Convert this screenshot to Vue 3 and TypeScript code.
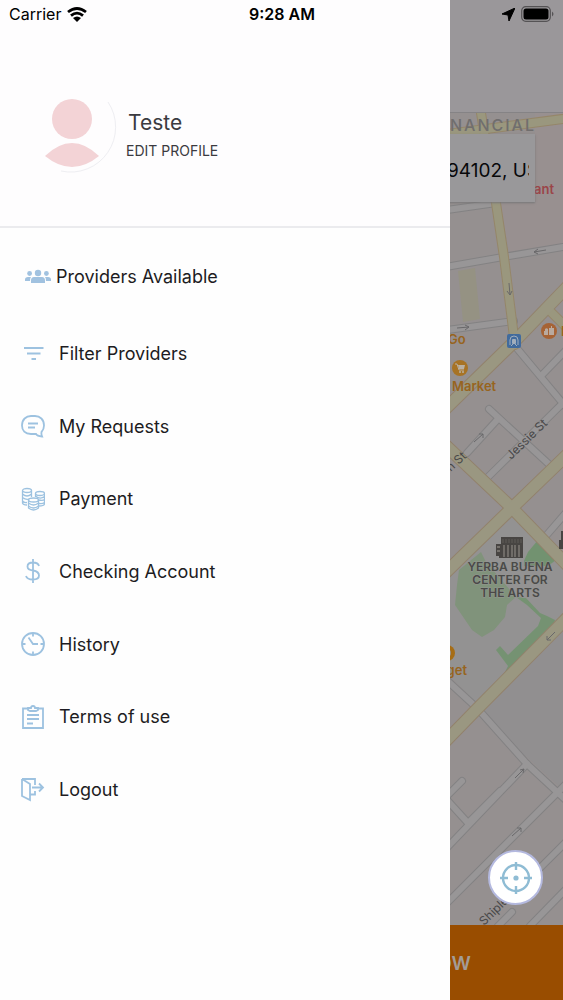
<script setup lang="ts">
import { ref } from 'vue'

type IconName = 'filter' | 'chat' | 'coins' | 'dollar' | 'clock' | 'terms' | 'logout'

interface MenuItem {
  label: string
  icon: IconName
}

const items: MenuItem[] = [
  { label: 'Filter Providers', icon: 'filter' },
  { label: 'My Requests', icon: 'chat' },
  { label: 'Payment', icon: 'coins' },
  { label: 'Checking Account', icon: 'dollar' },
  { label: 'History', icon: 'clock' },
  { label: 'Terms of use', icon: 'terms' },
  { label: 'Logout', icon: 'logout' },
]

const address = ref('94102, US')

const greyRoads: string[] = [
  'M440 211L496 203',
  'M440 268L503 257L563 247',
  'M440 331L514 321',
  'M515 346L570 412',
  'M541 376L570 346',
  'M489 409L552 467',
  'M498 419L467 453',
  'M487 478L570 396',
  'M545 537L570 508',
  'M440 674L477 708L527 764L570 804',
  'M527 764L440 855',
  'M448 801L468 823L500 791',
  'M570 780L440 910',
  'M448 795L462 781',
  'M570 838L538 870',
  'M512 912L498 926',
  'M570 885L530 926',
]

const yellowRoads: string[] = [
  'M440 135L570 118',
  'M481 113L490 170L496 203L504 257L515 345',
  'M547 308L570 331',
]

const avenues: string[] = [
  'M570 284L514 342L440 414',
  'M440 440L512 508L570 568',
  'M570 452L512 508L440 578',
  'M570 615L477 709L440 747',
]
</script>

<template>
  <div class="app">
    <main class="screen">
      <div class="topbar"></div>

      <section class="map" aria-label="Map">
        <svg class="map-canvas" viewBox="0 113 563 812" preserveAspectRatio="xMaxYMin slice" aria-hidden="true">
          <rect y="113" width="563" height="812" fill="#959090" />
          <path d="M535 113H563V246L510 255L499 203H535Z" fill="#989090" />
          <path d="M458 271L475 268L480 319L463 322Z" fill="#959283" />
          <path d="M450 575L512 513L563 566V618L477 704L450 676Z" fill="#939292" />
          <path d="M477 714L563 628V790L527 757Z" fill="#918f90" />
          <path d="M459 570L481 552L486 562L516 597L507 605L505 617L494 630L482 637L472 630L455 605L457 585Z" fill="#80937b" />
          <path d="M524 561L528 552L538 540L556 560L548 566H524Z" fill="#729270" />
          <path d="M516 597L526 598L540 613L547 616L555 620L553 627L508 672L503 676L508 666L496 650L500 646L508 655L538 626L541 618L527 605Z" fill="#759272" />

          <g fill="none" stroke-linejoin="round" stroke-linecap="round">
            <path v-for="d in greyRoads" :key="`ge${d}`" :d="d" stroke="#838283" stroke-width="8" />
            <path v-for="d in greyRoads" :key="`gf${d}`" :d="d" stroke="#989697" stroke-width="6" />
            <path v-for="d in yellowRoads" :key="`ye${d}`" :d="d" stroke="#958669" stroke-width="10" />
            <path v-for="d in avenues" :key="`ae${d}`" :d="d" stroke="#92826c" stroke-width="13" />
            <path v-for="d in yellowRoads" :key="`yf${d}`" :d="d" stroke="#9a977e" stroke-width="8" />
            <path v-for="d in avenues" :key="`af${d}`" :d="d" stroke="#9a9781" stroke-width="11" />
          </g>

          <g fill="none" stroke="#69686a" stroke-width="1">
            <path d="M546 250L534 252M538 249L534 252L538 254" />
            <path d="M457 328L469 327M465 325L469 327L465 330" />
            <path d="M509 283L510 295M507 291L510 295L512 291" />
            <path d="M474 442L483 434M479 434H483V438" />
            <path d="M555 632L547 640M547 636V640H551" />
            <path d="M515 778L524 769M520 770L524 769L523 773" />
            <path d="M512 836L521 828M517 828H521V832" />
          </g>

          <text class="district" x="536" y="131" text-anchor="end">FINANCIAL</text>
          <text class="poi red" x="534" y="194">ant</text>
          <text class="poi gold" x="448" y="344">Go</text>
          <text class="poi gold" x="452" y="391">Market</text>
          <text class="poi gold" x="467" y="675" text-anchor="end">Target</text>
          <text class="poi gold" x="561" y="336">H</text>
          <text class="street" text-anchor="end" transform="translate(467 457) rotate(-43)">Mission St</text>
          <text class="street" transform="translate(511 460) rotate(-44)">Jessie St</text>
          <text class="street" transform="translate(484 926) rotate(-44)">Shipley St</text>
          <g class="landmark" text-anchor="middle">
            <text x="510" y="571">YERBA BUENA</text>
            <text x="510" y="584">CENTER FOR</text>
            <text x="510" y="597">THE ARTS</text>
          </g>

          <rect x="507" y="334" width="14" height="14" rx="2" fill="#416b9d" />
          <path d="M510 345V340Q510 336 514 336T518 340V345" fill="none" stroke="#a1aebc" />
          <rect x="512" y="339" width="4" height="5" rx="1" fill="#a1aebc" />
          <path d="M511 346L513 344M517 346L515 344" stroke="#a1aebc" />
          <circle cx="549" cy="331" r="8" fill="#a66335" />
          <path d="M544 335V331H545V329A2 2 0 0 1 548 329V335ZM549 335V328H551V326H552V328H554V335Z" fill="#b9aa9f" />
          <circle cx="460" cy="368" r="8" fill="#a77325" />
          <path d="M455 364H457L459 370H464" fill="none" stroke="#b9b0a2" />
          <path d="M458 365H465L464 369H459Z" fill="#b9b0a2" />
          <circle cx="460" cy="372" r="1" fill="#b9b0a2" />
          <circle cx="463" cy="372" r="1" fill="#b9b0a2" />
          <circle cx="447" cy="653" r="8" fill="#a66d15" />
          <circle cx="447" cy="653" r="4" fill="#98928c" />
          <path d="M501 537H523V558H499V556H496V544H501Z" fill="#484543" />
          <path d="M504 545V557M508 545V557M512 545V557M515 545V557M519 545V557M497 547H500M497 551H500" stroke="#85817c" stroke-width="1.3" />
          <path d="M502 540H522M502 542H522" stroke="#5f5c59" stroke-dasharray="2 1" />
          <path d="M559 540H561V531H563V549H559Z" fill="#484543" />
        </svg>

        <label class="address">
          <input v-model="address" type="text" aria-label="Address" />
        </label>

        <button class="locate" type="button" aria-label="Locate me">
          <svg viewBox="0 0 34 34" aria-hidden="true">
            <g fill="none" stroke="#8fbcd4" stroke-width="2.4">
              <circle cx="17" cy="17" r="13" />
              <path d="M17 1V9M17 25V33M1 17H9M25 17H33" />
            </g>
            <circle cx="17" cy="17" r="2.6" fill="#8fbcd4" />
          </svg>
        </button>
      </section>

      <button class="request" type="button">NOW</button>
    </main>

    <aside class="drawer">
      <header class="profile">
        <svg class="avatar" viewBox="0 0 92 92" aria-hidden="true">
          <path d="M82 20A45 45 0 0 1 35 89" fill="none" stroke="#eeeef2" />
          <circle cx="46" cy="37" r="20" fill="#f3d3d6" />
          <path d="M19 74Q46 48 73 74Q46 96 19 74Z" fill="#f3d3d6" />
        </svg>
        <div class="identity">
          <h1>Teste</h1>
          <a href="#profile">EDIT PROFILE</a>
        </div>
      </header>

      <nav>
        <a class="item available" href="#available">
          <svg viewBox="0 0 26 14" aria-hidden="true">
            <g fill="#a1c2e0">
              <circle cx="13" cy="4" r="3.2" />
              <circle cx="4.600" cy="4.500" r="2.400" />
              <circle cx="21.400" cy="4.500" r="2.400" />
              <path d="M6 14V11.500Q6 8 9 8H17Q20 8 20 11.500V14Z" />
              <path d="M0 12V10.500Q0 8 3 8H6Q5 9 5 12ZM26 12V10.500Q26 8 23 8H20Q21 9 21 12Z" />
            </g>
          </svg>
          <span>Providers Available</span>
        </a>

        <ul>
          <li v-for="item in items" :key="item.label">
            <a class="item" :href="`#${item.icon}`">
              <svg viewBox="0 0 24 24" aria-hidden="true">
                <g fill="none" stroke="#9dc2e0" stroke-width="1.8">
                  <path v-if="item.icon === 'filter'" d="M3 7H22.500M6 12.500H19.500M10.500 18H15" stroke-width="2" />
                  <template v-else-if="item.icon === 'chat'">
                    <path d="M21 22.500Q16 22 15 20H10C4 20 1 16.500 1 11.500C1 5.500 5 2 10 2H14C19 2 23 5.500 23 11.500Q23 15.500 20.500 18Q20 20.500 21 22.500Z" />
                    <path d="M7 9.500H17M7 13.500H14" />
                  </template>
                  <g v-else-if="item.icon === 'coins'" stroke-width="1.300">
                    <ellipse cx="6" cy="3.500" rx="4.500" ry="2" />
                    <path d="M1.500 3.500V16Q2 18 6 18M10.500 3.500V10M1.500 7Q6 11 10.500 7M1.500 10.500Q5 13 8 12M1.500 14Q3 16 6 15.500" />
                    <ellipse cx="19" cy="6.500" rx="4.500" ry="2" />
                    <path d="M14.500 6.500V10M23.500 6.500V17Q23 19 18 19M14.500 9Q19 13 23.500 9.500M17.500 13Q22 14 23.500 12.500M18 16.500Q22 17 23.500 15.500" />
                    <ellipse cx="12.500" cy="13" rx="5" ry="2" />
                    <path d="M7.500 13V21Q12.500 25 17.500 21V13M7.500 16Q12.500 20 17.500 16M7.500 19Q12.500 23 17.500 19" />
                  </g>
                  <path v-else-if="item.icon === 'dollar'" d="M12 0V24M18 7Q17 3.500 12 3.500Q6.500 3.500 6.500 7.500Q6.500 11 12 11.500Q18 12.500 18 16.500Q18 20.500 12 20.500Q6 20.500 5 17" />
                  <template v-else-if="item.icon === 'clock'">
                    <circle cx="12" cy="12" r="11" />
                    <path d="M12 1V4.500M12 19.500V23M1 12H4.500M19.500 12H23M7.500 5.500L12 12H17" />
                  </template>
                  <template v-else-if="item.icon === 'terms'">
                    <path d="M7 3.500H2V23H22V3.500H17" />
                    <path d="M7 5V3H10Q10 1 12 1T14 3H17V5L15 6H9Z" />
                    <path d="M6 10H18M6 14H18M6 18.500H12" />
                  </template>
                  <template v-else>
                    <path d="M1 1H14V7M1 1V18L9 22V6L1 1M9 16.500H14V13" />
                    <path d="M11 9.500H22M18 5.500L22 9.500L18 13.500" />
                  </template>
                </g>
              </svg>
              <span>{{ item.label }}</span>
            </a>
          </li>
        </ul>
      </nav>
    </aside>

    <div class="status">
      <div class="carrier">
        <span>Carrier</span>
        <svg class="wifi" viewBox="0 0 20 15" aria-hidden="true">
          <g fill="none" stroke="#000" stroke-width="2.800">
            <path d="M1 5Q10 -2 19 5" />
            <path d="M4 8.600Q10 3.600 16 8.600" />
          </g>
          <path d="M6 11Q10 8 14 11L10 15Z" />
        </svg>
      </div>
      <time>9:28 AM</time>
      <div class="power">
        <svg class="arrow" viewBox="0 0 13 13" aria-hidden="true">
          <path d="M0 6L13 0L7 13L6 7Z" stroke="#000" />
        </svg>
        <svg class="battery" viewBox="0 0 34 16" aria-hidden="true">
          <rect x=".7" y=".7" width="28.600" height="14.600" rx="4" fill="none" stroke="#555355" stroke-width="1.200" />
          <rect x="2.500" y="2.500" width="25" height="11" rx="2.500" />
          <path d="M31 5.500Q34 8 31 10.500Z" fill="#555355" />
        </svg>
      </div>
    </div>
  </div>
</template>

<style>
body {
  margin: 0;
}
</style>

<style scoped>
.app {
  position: relative;
  overflow: hidden;
  min-height: 100vh;
  font-family: Inter, "Liberation Sans", sans-serif;
  color: #1d1c22;
}

.screen {
  display: flex;
  flex-direction: column;
  min-height: 100vh;
}

.topbar {
  height: 112px;
  border-bottom: 1px solid #858385;
  background: #9a979a;
}

.map {
  position: relative;
  flex: 1;
  overflow: hidden;
}

.map-canvas {
  position: absolute;
  inset: 0;
  width: 100%;
  height: 100%;
}

.district {
  font-size: 16px;
  font-weight: 500;
  letter-spacing: 2px;
  fill: #706e6e;
}

.poi {
  font-size: 13px;
  font-weight: 600;
}

.red {
  fill: #9b4549;
}

.gold {
  fill: #97641e;
}

.street {
  font-size: 12px;
  fill: #484748;
}

.landmark {
  font-size: 12px;
  font-weight: 600;
  fill: #4a4a48;
  stroke: #959592;
  stroke-width: 1px;
  paint-order: stroke;
}

.address {
  position: relative;
  display: flex;
  justify-content: flex-end;
  box-sizing: border-box;
  height: 68px;
  margin: 21px 28px 0;
  padding: 0 6px;
  background: #99989a;
  box-shadow: 0 1px 2px #777677;
}

.address input {
  width: 82px;
  padding: 4px 0 0;
  border: 0;
  background: transparent;
  font: 400 19px Inter, sans-serif;
  color: #08080a;
}

.locate {
  position: absolute;
  right: 20px;
  bottom: 20px;
  display: grid;
  place-items: center;
  width: 55px;
  height: 55px;
  padding: 0;
  border: 2px solid #b4b9df;
  border-radius: 50%;
  background: #fff;
}

.locate svg {
  width: 34px;
  height: 34px;
}

.request {
  height: 75px;
  padding: 2px 92px 0;
  border: 0;
  background: #994d00;
  font: 600 19px Inter, sans-serif;
  color: #a39c96;
  text-align: right;
}

.drawer {
  position: absolute;
  top: 0;
  bottom: 0;
  left: 0;
  width: 80%;
  background: #fefefe;
}

.profile {
  display: flex;
  align-items: center;
  gap: 8px;
  box-sizing: border-box;
  height: 228px;
  padding: 29px 26px 0;
  border-bottom: 2px solid #ebebee;
  background: #fefdfe;
}

.avatar {
  width: 92px;
  height: 92px;
}

.identity {
  display: flex;
  flex-direction: column;
  gap: 6px;
  padding-top: 15px;
}

.identity h1 {
  margin: 0;
  padding-left: 2px;
  font-size: 21px;
  font-weight: 400;
  line-height: 26px;
  color: #3b3a40;
}

.identity a {
  font-size: 14px;
  line-height: 18px;
  color: #3b3a40;
  text-decoration: none;
}

nav ul {
  display: grid;
  grid-auto-rows: 1fr;
  height: 509px;
  margin: 0;
  padding: 0;
  list-style: none;
}

.item {
  display: flex;
  align-items: center;
  gap: 14px;
  height: 100%;
  padding: 0 21px;
  font-size: 18px;
  font-weight: 400;
  color: #1d1c22;
  text-decoration: none;
}

.item svg {
  width: 24px;
  height: 24px;
}

.item.available {
  gap: 5px;
  box-sizing: border-box;
  height: 89px;
  padding: 7px 25px 0;
}

.item.available svg {
  width: 26px;
  height: 14px;
}

.status {
  position: absolute;
  top: 0;
  right: 0;
  left: 0;
  display: grid;
  grid-template-columns: 1fr auto 1fr;
  align-items: center;
  height: 28px;
  padding: 0 8px 0 9px;
  font-size: 16px;
  color: #000;
}

.carrier,
.power {
  display: flex;
  align-items: center;
  gap: 6px;
}

.power {
  justify-content: flex-end;
}

.wifi {
  width: 20px;
  height: 15px;
}

.arrow {
  width: 13px;
  height: 13px;
}

.battery {
  width: 34px;
  height: 16px;
}

time {
  font-weight: 600;
}
</style>
